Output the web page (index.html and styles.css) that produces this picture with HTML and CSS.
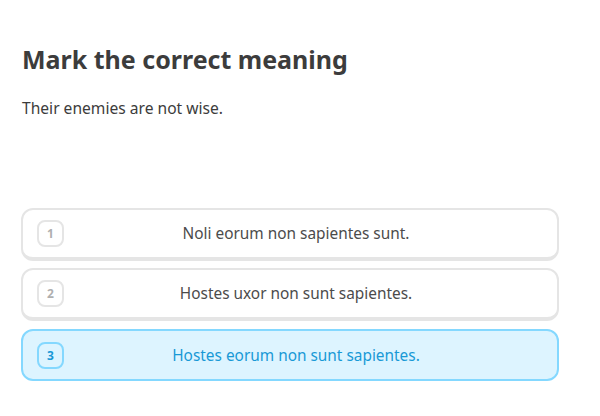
FILE: index.html
```html
<!DOCTYPE html>
<html>
<head>
<meta charset="utf-8">
<link rel="stylesheet" href="styles.css">
</head>
<body>
<main class="page">
  <h1 class="title">Mark the correct meaning</h1>
  <p class="prompt">Their enemies are not wise.</p>
  <div class="choices">
    <div class="choice">
      <span class="num">1</span>
      <span class="label">Noli eorum non sapientes sunt.</span>
    </div>
    <div class="choice">
      <span class="num">2</span>
      <span class="label">Hostes uxor non sunt sapientes.</span>
    </div>
    <div class="choice selected">
      <span class="num">3</span>
      <span class="label">Hostes eorum non sunt sapientes.</span>
    </div>
  </div>
</main>
</body>
</html>
```

FILE: styles.css
```css
* { box-sizing: border-box; }
html, body { margin: 0; padding: 0; background: #fff; }
body { font-family: "Noto Sans", "Lato", sans-serif; color: #4b4b4b; }
.page { padding: 42px 41px 0 21px; }
.title {
  margin: 0;
  font-size: 25px;
  font-weight: 700;
  color: #3c3c3c;
  line-height: 34px;
  padding-left: 1px;
}
.prompt {
  margin: 22px 0 0 1px;
  font-size: 15.6px;
  line-height: 20px;
  color: #3c3c3c;
}
.choices {
  margin-top: 90px;
  display: flex;
  flex-direction: column;
  gap: 7px;
}
.choice {
  display: flex;
  align-items: center;
  height: 53px;
  border: 2px solid #e5e5e5;
  border-bottom-width: 4px;
  border-radius: 12px;
  padding: 0 14px;
  background: #fff;
}
.num {
  width: 27px;
  height: 27px;
  border: 2px solid #e5e5e5;
  border-radius: 8px;
  display: flex;
  align-items: center;
  justify-content: center;
  font-size: 12px;
  font-weight: 700;
  color: #afafaf;
}
.label {
  flex: 1;
  text-align: center;
  font-size: 15.4px;
  padding-right: 15px;
}
.choice.selected {
  margin-top: 1px;
  background: #ddf4ff;
  border-color: #84d8ff;
  border-bottom-width: 2px;
  height: 52px;
}
.choice.selected .num { border-color: #84d8ff; color: #1899d6; }
.choice.selected .label { color: #1899d6; }
```
